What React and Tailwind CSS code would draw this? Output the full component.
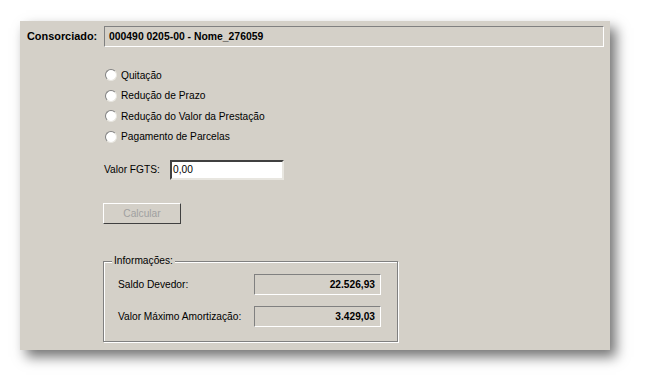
export default function App() {
  const font = { fontFamily: '"Liberation Sans", Arial, sans-serif' };
  const radios = [
    "Quitação",
    "Redução de Prazo",
    "Redução do Valor da Prestação",
    "Pagamento de Parcelas",
  ];
  return (
    <div className="w-[652px] h-[392px] bg-white overflow-hidden pt-[21px] pl-[20px]" style={font}>
      <div className="relative w-[590px] h-[329px] bg-[#d4d0c8] shadow-[6px_7px_12px_rgba(0,0,0,0.55)] text-[10.2px] text-black">
        {/* Consorciado row */}
        <div className="flex items-center pt-[5px] pl-[7px]">
          <span className="w-[77px] font-bold text-[10.9px]">Consorciado:</span>
          <div className="w-[500px] h-[21px] border border-t-[#808080] border-l-[#808080] border-b-white border-r-white flex items-center pl-[4px] font-bold text-[10.4px]">
            000490 0205-00 - Nome_276059
          </div>
        </div>

        {/* Radios */}
        <div className="flex flex-col pl-[85px] mt-[18px]">
          {radios.map((r) => (
            <div key={r} className="flex items-center h-[20.5px] gap-[4px]">
              <span className="w-[12px] h-[12px] rounded-full bg-white border-[1.5px] border-t-[#808080] border-l-[#808080] border-b-[#e8e6e0] border-r-[#e8e6e0]" />
              <span>{r}</span>
            </div>
          ))}
        </div>

        {/* Valor FGTS */}
        <div className="flex items-center pl-[84px] mt-[13px]">
          <span className="w-[66px]">Valor FGTS:</span>
          <div className="w-[114px] h-[20px] bg-white border-[2px] border-t-[#404040] border-l-[#404040] border-b-[#e8e6e0] border-r-[#e8e6e0] flex items-center pl-[1px]">
            0,00
          </div>
        </div>

        {/* Calcular */}
        <div className="pl-[83px] mt-[23px]">
          <div className="w-[78px] h-[21px] border border-t-white border-l-white border-b-[#404040] border-r-[#404040] flex items-center justify-center text-[#a0a0a0]">
            Calcular
          </div>
        </div>

        {/* Informações */}
        <div className="pl-[83px] mt-[37px]">
          <div className="relative w-[295px] h-[81px] border border-[#808080] shadow-[inset_1px_1px_0_#fff,1px_1px_0_#fff]">
            <span className="absolute -top-[8px] left-[8px] px-[2px] bg-[#d4d0c8] leading-[14px]">Informações:</span>
            <div className="flex items-center pl-[14px] mt-[12px]">
              <span className="w-[136px]">Saldo Devedor:</span>
              <div className="w-[127px] h-[21px] border border-t-[#808080] border-l-[#808080] border-b-white border-r-white flex items-center justify-end pr-[5px] font-bold">
                22.526,93
              </div>
            </div>
            <div className="flex items-center pl-[14px] mt-[11px]">
              <span className="w-[136px]">Valor Máximo Amortização:</span>
              <div className="w-[127px] h-[21px] border border-t-[#808080] border-l-[#808080] border-b-white border-r-white flex items-center justify-end pr-[5px] font-bold">
                3.429,03
              </div>
            </div>
          </div>
        </div>
      </div>
    </div>
  );
}
